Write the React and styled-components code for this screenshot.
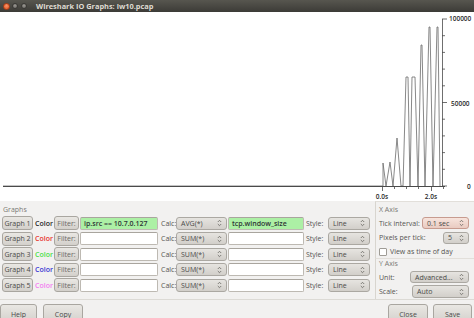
import React from 'react'
import styled, { createGlobalStyle } from 'styled-components'

const GlobalStyle = createGlobalStyle`
  html, body {
    margin: 0;
    padding: 0;
    background: #f2f1f0;
  }
  body {
    font-family: "Open Sans", "DejaVu Sans", sans-serif;
    font-size: 7px;
    color: #3c3c3c;
  }
`

const Window = styled.div`
  width: 474px;
  height: 318px;
  overflow: hidden;
  display: flex;
  flex-direction: column;
  background: #f2f1f0;
`

const TitleBar = styled.div`
  flex: none;
  height: 12px;
  display: flex;
  align-items: center;
  padding-left: 3px;
  background: linear-gradient(#57564f, #3c3b37);
`

const WinButton = styled.span`
  flex: none;
  width: ${p => (p.$close ? 7 : 6)}px;
  height: ${p => (p.$close ? 7 : 6)}px;
  margin-right: ${p => (p.$close ? 2 : 3)}px;
  border-radius: 50%;
  box-sizing: border-box;
  border: 1px solid ${p => (p.$close ? '#b23c12' : '#3a3935')};
  background: ${p =>
    p.$close
      ? 'radial-gradient(circle at 50% 35%, #f9946a, #e0531f)'
      : 'radial-gradient(circle at 50% 35%, #9a9893, #66645f)'};
`

const Title = styled.span`
  margin-left: 6px;
  font-weight: 700;
  font-size: 7.4px;
  line-height: 12px;
  color: #dfdbd2;
  white-space: nowrap;
`

const ChartSvg = styled.svg`
  display: block;
  flex: none;
  background: #ffffff;
`

const Controls = styled.div`
  flex: none;
  height: 99px;
  display: flex;
  box-sizing: border-box;
  border-bottom: 1px solid #dcdad5;
`

const GraphsFrame = styled.div`
  width: 373px;
  flex: none;
  padding-top: 4px;
  box-sizing: border-box;
`

const FrameLabel = styled.div`
  height: 10px;
  line-height: 10px;
  padding-left: ${p => p.$indent || 3}px;
  color: #7a7975;
`

const Rows = styled.div`
  display: flex;
  flex-direction: column;
  gap: 1.5px;
  margin-top: 1px;
  padding-left: 2px;
`

const GraphRow = styled.div`
  display: grid;
  grid-template-columns: 31px 19px 25px 78px 16px 51px 76px 22px 42px;
  column-gap: 1px;
  height: 14px;
  align-items: center;
`

const Button = styled.div`
  box-sizing: border-box;
  height: ${p => p.$h || 14}px;
  width: ${p => (p.$w ? `${p.$w}px` : 'auto')};
  display: flex;
  align-items: center;
  justify-content: center;
  border: 1px solid #a9a6a0;
  border-radius: 3px;
  background: linear-gradient(#e9e7e3, #d3d0cb);
  color: ${p => p.$color || '#4a4a48'};
  white-space: nowrap;
`

const ColorLabel = styled.span`
  padding-left: 1px;
  font-weight: 600;
  color: ${p => p.$color};
`

const Entry = styled.div`
  box-sizing: border-box;
  height: 13px;
  padding-left: 3px;
  display: flex;
  align-items: center;
  border: 1px solid #bdb9b2;
  border-top-color: #a9a59e;
  border-radius: 2px;
  background: ${p => (p.$on ? '#acf0a5' : '#ffffff')};
  color: #2e3436;
  font-weight: 600;
  white-space: nowrap;
  overflow: hidden;
`

const FieldLabel = styled.span`
  padding-left: ${p => p.$pad || 0}px;
  color: #555451;
  white-space: nowrap;
`

const ComboBox = styled.div`
  box-sizing: border-box;
  height: ${p => p.$h || 13}px;
  width: ${p => (p.$w ? `${p.$w}px` : 'auto')};
  display: flex;
  align-items: center;
  justify-content: space-between;
  padding: 0 4px 0 4px;
  border: 1px solid ${p => (p.$focus ? '#c79b8f' : '#aba8a2')};
  border-radius: 3px;
  background: ${p =>
    p.$focus
      ? 'linear-gradient(#f7e4dc, #e9cbc1)'
      : 'linear-gradient(#e6e4e0, #d2cfca)'};
  color: #4a4a48;
  white-space: nowrap;
`

const RightPanel = styled.div`
  flex: 1;
  padding-left: 2px;
  display: flex;
  flex-direction: column;
`

const AxisFrame = styled.div`
  box-sizing: border-box;
  height: ${p => p.$h}px;
  padding-top: ${p => p.$top}px;
  border-left: 1px solid #d8d5cf;
  border-top: 1px solid #e2dfda;
  display: flex;
  flex-direction: column;
  gap: ${p => p.$gap}px;
`

const AxisRow = styled.div`
  height: ${p => p.$h || 13}px;
  display: flex;
  align-items: center;
  justify-content: space-between;
  padding: 0 5px 0 3px;
`

const CheckRow = styled.div`
  height: 12px;
  display: flex;
  align-items: center;
  gap: 3px;
  padding-left: 3px;
  color: #555451;
`

const CheckBox = styled.span`
  width: 8px;
  height: 8px;
  box-sizing: border-box;
  border: 1px solid #9f9c96;
  border-radius: 1px;
  background: #ffffff;
`

const ButtonBar = styled.div`
  flex: none;
  display: flex;
  justify-content: space-between;
  padding-top: 4px;
`

const ButtonGroup = styled.div`
  display: flex;
  gap: ${p => p.$gap}px;
  margin-right: ${p => p.$right || 0}px;
`

const Arrows = () => (
  <svg width="5" height="8" viewBox="0 0 5 8">
    <path d="M0.8 3 L2.5 1.3 L4.2 3 M0.8 5 L2.5 6.7 L4.2 5" fill="none" stroke="#66645f" strokeWidth="0.8" />
  </svg>
)

const Combo = ({ children, ...rest }) => (
  <ComboBox {...rest}>
    <span>{children}</span>
    <Arrows />
  </ComboBox>
)

const graphs = [
  { name: 'Graph 1', color: '#1e1e1e', filter: 'ip.src == 10.7.0.127', calc: 'AVG(*)', field: 'tcp.window_size' },
  { name: 'Graph 2', color: '#e8302c', calc: 'SUM(*)' },
  { name: 'Graph 3', color: '#46e046', calc: 'SUM(*)' },
  { name: 'Graph 4', color: '#3232d2', calc: 'SUM(*)' },
  { name: 'Graph 5', color: '#f27cf0', calc: 'SUM(*)' },
]

// x,y in page coordinates (baseline 186, 100000 at 19)
const samples = [
  [3, 186], [383, 186], [383, 163], [386, 186], [390, 162], [393, 186],
  [397, 138], [401, 186], [403, 186], [406, 77], [408, 77], [410, 186],
  [412, 77], [415, 77], [418, 186], [421, 45], [422, 45], [425, 186],
  [429, 27], [430, 27], [433, 186], [437, 27], [438, 27], [440, 186],
]

const Chart = () => {
  const yTicks = []
  for (let i = 0; i <= 10; i++) yTicks.push(186 - i * 16.7)
  const xTicks = [382, 394, 406, 418, 431, 443]
  return (
    <ChartSvg width="474" height="189" viewBox="0 12 474 189">
      <polyline
        points={samples.map(p => p.join(',')).join(' ')}
        fill="none"
        stroke="#6a6a6a"
        strokeWidth="0.8"
      />
      <line x1="3" y1="186.5" x2="445" y2="186.5" stroke="#4a4a4a" strokeWidth="1" />
      {xTicks.map((x, i) => (
        <line key={x} x1={x + 0.5} y1="186" x2={x + 0.5} y2={i === 0 || i === 4 ? 191 : 189} stroke="#4a4a4a" strokeWidth="0.8" />
      ))}
      <line x1="442.5" y1="19" x2="442.5" y2="186" stroke="#4a4a4a" strokeWidth="0.8" />
      {yTicks.map((y, i) => (
        <line key={i} x1="442" y1={y} x2={i % 5 === 0 ? 447 : 445} y2={y} stroke="#4a4a4a" strokeWidth="0.8" />
      ))}
      <g fontFamily='"Open Sans", sans-serif' fontSize="6.5" fontWeight="600" fill="#2a2a2a">
        <text x="449" y="21">100000</text>
        <text x="451" y="105.5">50000</text>
        <text x="467" y="189">0</text>
        <text x="382" y="199" textAnchor="middle">0.0s</text>
        <text x="431" y="199" textAnchor="middle">2.0s</text>
      </g>
    </ChartSvg>
  )
}

export default function App() {
  return (
    <Window>
      <GlobalStyle />
      <TitleBar>
        <WinButton $close />
        <WinButton />
        <WinButton />
        <Title>Wireshark IO Graphs: iw10.pcap</Title>
      </TitleBar>
      <Chart />
      <Controls>
        <GraphsFrame>
          <FrameLabel>Graphs</FrameLabel>
          <Rows>
            {graphs.map(g => (
              <GraphRow key={g.name}>
                <Button>{g.name}</Button>
                <ColorLabel $color={g.color}>Color</ColorLabel>
                <Button $color="#6a6966">Filter:</Button>
                <Entry $on={!!g.filter}>{g.filter}</Entry>
                <FieldLabel $pad={2}>Calc:</FieldLabel>
                <Combo>{g.calc}</Combo>
                <Entry $on={!!g.field}>{g.field}</Entry>
                <FieldLabel $pad={1}>Style:</FieldLabel>
                <Combo>Line</Combo>
              </GraphRow>
            ))}
          </Rows>
        </GraphsFrame>
        <RightPanel>
          <AxisFrame $h={57} $top={3} $gap={1.5}>
            <FrameLabel $indent={3}>X Axis</FrameLabel>
            <AxisRow $h={13}>
              <FieldLabel>Tick interval:</FieldLabel>
              <Combo $w={47} $h={12} $focus>0.1 sec</Combo>
            </AxisRow>
            <AxisRow $h={13}>
              <FieldLabel>Pixels per tick:</FieldLabel>
              <Combo $w={26} $h={12}>5</Combo>
            </AxisRow>
            <CheckRow>
              <CheckBox />
              <span>View as time of day</span>
            </CheckRow>
          </AxisFrame>
          <AxisFrame $h={41} $top={0} $gap={2}>
            <FrameLabel $indent={3}>Y Axis</FrameLabel>
            <AxisRow $h={12}>
              <FieldLabel>Unit:</FieldLabel>
              <Combo $w={59} $h={12}>Advanced...</Combo>
            </AxisRow>
            <AxisRow $h={13}>
              <FieldLabel>Scale:</FieldLabel>
              <Combo $w={57} $h={13}>Auto</Combo>
            </AxisRow>
          </AxisFrame>
        </RightPanel>
      </Controls>
      <ButtonBar>
        <ButtonGroup $gap={6}>
          <Button $w={37} $h={20}>Help</Button>
          <Button $w={40} $h={20}>Copy</Button>
        </ButtonGroup>
        <ButtonGroup $gap={5} $right={2}>
          <Button $w={40} $h={20}>Close</Button>
          <Button $w={39} $h={20}>Save</Button>
        </ButtonGroup>
      </ButtonBar>
    </Window>
  )
}
